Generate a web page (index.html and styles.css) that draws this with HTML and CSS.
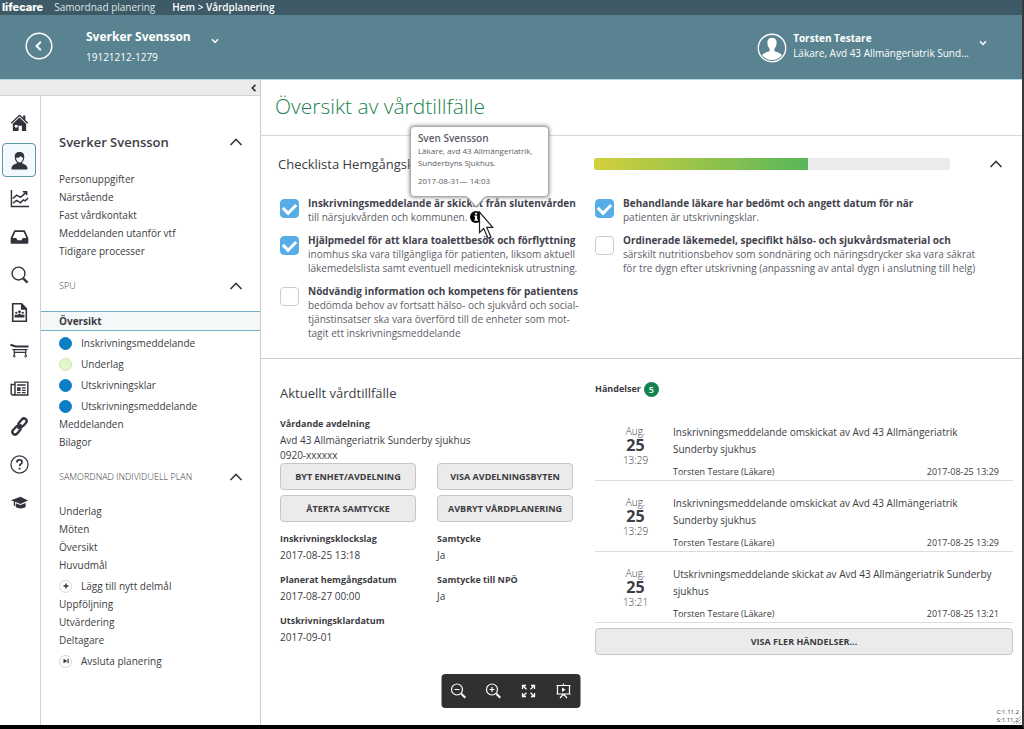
FILE: index.html
```html
<!DOCTYPE html>
<html lang="sv">
<head>
<meta charset="utf-8">
<meta name="viewport" content="width=device-width, initial-scale=1">
<title>Översikt av vårdtillfälle</title>
<link rel="stylesheet" href="styles.css">
</head>
<body>
<svg class="defs" aria-hidden="true">
  <symbol id="chev-up" viewBox="0 0 14 8"><path d="M1.500 7 7 1.500 12.500 7" fill="none" stroke="currentColor" stroke-width="1.700"/></symbol>
  <symbol id="chev-down" viewBox="0 0 8 6"><path d="M1 1.200 4 4.400 7 1.200" fill="none" stroke="currentColor" stroke-width="1.500"/></symbol>
</svg>
<div class="page">
  <nav class="topbar" aria-label="Sökväg">
    <span class="logo">lifecare</span>
    <span class="product">Samordnad planering</span>
    <span class="crumbs"><a href="#">Hem</a> &gt; <a href="#">Vårdplanering</a></span>
  </nav>
  <header class="header">
    <button class="back" aria-label="Tillbaka"><svg viewBox="0 0 28 28" width="28" height="28"><circle cx="14" cy="14" r="12.800" fill="none" stroke="#fff" stroke-width="1.500"/><path d="M15.800 9.800 11.600 14l4.200 4.200" fill="none" stroke="#fff" stroke-width="2"/></svg></button>
    <div class="patient">
      <strong>Sverker Svensson</strong>
      <span>19121212-1279</span>
    </div>
    <button class="drop" aria-label="Byt patient"><svg width="8" height="6"><use href="#chev-down"/></svg></button>
    <div class="user">
      <svg viewBox="0 0 30 30" width="30" height="30"><circle cx="15" cy="15" r="13.700" fill="none" stroke="#fff" stroke-width="1.400"/><path d="M15 4.800c3.200 0 4.800 2 4.600 5.200-.1 3-1.200 4.700-2.200 5.700v2c.6 1.300 6.600 2 7.500 4.600C22.500 25.300 19 27 15 27s-7.500-1.700-9.900-4.700c.9-2.600 6.900-3.300 7.500-4.600v-2c-1-1-2.100-2.700-2.200-5.700-.2-3.200 1.400-5.200 4.600-5.200z" fill="#fff"/></svg>
      <div class="user-text">
        <strong>Torsten Testare</strong>
        <span>Läkare, Avd 43 Allmängeriatrik Sund...</span>
      </div>
      <button class="drop" aria-label="Användarmeny"><svg width="8" height="6"><use href="#chev-down"/></svg></button>
    </div>
  </header>
  <div class="body">
    <aside class="side">
      <div class="collapse"><button aria-label="Dölj meny"><svg viewBox="0 0 8 8" width="8" height="8"><path d="M5.500.8 2.300 4l3.200 3.200" fill="none" stroke="#333" stroke-width="1.700"/></svg></button></div>
      <div class="side-cols">
        <nav class="rail" aria-label="Moduler">
          <button aria-label="Hem"><svg viewBox="0 0 20 20"><path d="M10 1.500.8 10.200l1 1L10 3.500l8.200 7.700 1-1-3-2.900V2.500h-2.400v2.600z"/><path d="M10 4.700 3 11.300V19h6v-5.500h3.500V19H17v-7.700zM5 12.500h3v2.700H5z" fill-rule="evenodd"/></svg></button>
          <button class="on" aria-label="Patient"><svg viewBox="0 0 20 20"><path d="M10 1C6.700 1 4.700 3 5 6.500c.2 3 1.500 4.800 2.600 5.800-.5 1.500-5.800 1.300-6.100 6.200 0 .8.500 1 1.200 1h14.600c.7 0 1.200-.2 1.200-1-.3-4.900-5.600-4.700-6.100-6.200 1.100-1 2.400-2.800 2.600-5.800C15.300 3 13.300 1 10 1zM6.300 7.200c3 0 4.500-1 5-2 .4.900 1.300 1.600 2.500 1.800-.2 3-2 5-3.800 5S6.400 10 6.300 7.200z" fill-rule="evenodd"/></svg></button>
          <button aria-label="Statistik"><svg viewBox="0 0 20 20" class="ln"><path d="M1.500 1v17.500H20"/><path d="m3 10 4-3.500 4 2.300 6-5.300M13.500 3h4v3.500M3 15l4-3 4 2.500 3-3 2 1 3-3" stroke-width="1.600"/></svg></button>
          <button aria-label="Inkorg"><svg viewBox="0 0 20 20"><path d="M4.500 3.500h11l3.800 8v5.200c0 .5-.3.800-.8.800h-17c-.5 0-.8-.3-.8-.8v-5.200zm1.100 1.800-2.800 6.200h3.700l1.400 2.500h4.200l1.400-2.500h3.700l-2.800-6.200z" fill-rule="evenodd"/></svg></button>
          <button aria-label="Sök"><svg viewBox="0 0 20 20" class="ln"><circle cx="9" cy="9" r="6.800"/><path d="m13.800 14 4.700 4.500" stroke-width="2.500"/></svg></button>
          <button aria-label="Rapport"><svg viewBox="0 0 20 20"><path d="M2 0h10.500L18 5.500V20H2zm1.700 1.700v16.600h12.600V7H11.500V1.700z" fill-rule="evenodd"/><circle cx="10" cy="9.300" r="1.500"/><circle cx="6.600" cy="10.300" r="1.200"/><circle cx="13.400" cy="10.300" r="1.200"/><path d="M4.800 12.300h3L10 11l2.200 1.300h3v3H4.800z"/></svg></button>
          <button aria-label="Vårdplats"><svg viewBox="0 0 20 20" class="ln"><path d="m.5 4 5.500 1.800h13.500" stroke-width="2.200"/><path d="M2.500 9h16M4.500 9v6M16.500 9v6M4.500 12h12" stroke-width="1.300"/><circle cx="4.500" cy="16" r="1" stroke-width="1"/><circle cx="16.500" cy="16" r="1" stroke-width="1"/></svg></button>
          <button aria-label="Nyheter"><svg viewBox="0 0 20 20"><path d="M4.500 2.500h15v15H2.800c-1.300 0-2.300-1-2.300-2.300V5h4zM4.500 6.500H2v8.700c0 .5.400.8.800.8.900 0 1.700-.2 1.700-.8zM6 4v12h12V4z" fill-rule="evenodd"/><path d="M7.500 5.500h9v1.600h-9zM7.500 8.700h3.600v3.800H7.500zM12.500 8.700h4V10h-4zM12.500 11.200h4v1.300h-4zM7.500 13.800h3.600V15H7.500zM12.500 13.800h4V15h-4z"/></svg></button>
          <button aria-label="Länkar"><svg viewBox="0 0 20 20" class="ln"><rect x="-5" y="-2.800" width="10" height="5.600" rx="2.800" transform="translate(13.200 6) rotate(-48)" stroke-width="2.400"/><rect x="-5" y="-2.800" width="10" height="5.600" rx="2.800" transform="translate(6.800 14) rotate(-48)" stroke-width="2.400"/><path d="m8.200 12.300 3.600-4.600" stroke-width="2.400"/></svg></button>
          <button aria-label="Hjälp"><svg viewBox="0 0 20 20" class="ln"><circle cx="10" cy="10" r="9" stroke-width="1.300"/><path d="M7.300 7.800c0-1.700 1.200-2.600 2.700-2.600s2.700.9 2.700 2.300c0 2-2.600 2-2.600 4.200" stroke-width="1.800"/><path d="M10.100 13.300v2" stroke-width="2"/></svg></button>
          <button aria-label="Utbildning"><svg viewBox="0 0 20 20"><path d="M11 4 1 7.500l3 1.200v5l1.300-.3V9.200l5.700 2.300 8-3.500zM6 10.700l5 2 5.500-2.300v4.200c-2 2.200-8.500 2.200-10.500 0z"/></svg></button>
        </nav>
        <nav class="menu" aria-label="Patientmeny">
          <h2 class="menu-name">Sverker Svensson <button aria-label="Fäll ihop"><svg width="14" height="8"><use href="#chev-up"/></svg></button></h2>
          <ul>
            <li><a href="#">Personuppgifter</a></li>
            <li><a href="#">Närstående</a></li>
            <li><a href="#">Fast vårdkontakt</a></li>
            <li><a href="#">Meddelanden utanför vtf</a></li>
            <li><a href="#">Tidigare processer</a></li>
          </ul>
          <h3 class="menu-head">SPU <button aria-label="Fäll ihop"><svg width="14" height="8"><use href="#chev-up"/></svg></button></h3>
          <ul>
            <li class="current"><a href="#">Översikt</a></li>
            <li class="sub"><i class="dot"></i><a href="#">Inskrivningsmeddelande</a></li>
            <li class="sub"><i class="dot pale"></i><a href="#">Underlag</a></li>
            <li class="sub"><i class="dot"></i><a href="#">Utskrivningsklar</a></li>
            <li class="sub"><i class="dot"></i><a href="#">Utskrivningsmeddelande</a></li>
            <li><a href="#">Meddelanden</a></li>
            <li><a href="#">Bilagor</a></li>
          </ul>
          <h3 class="menu-head">SAMORDNAD INDIVIDUELL PLAN <button aria-label="Fäll ihop"><svg width="14" height="8"><use href="#chev-up"/></svg></button></h3>
          <ul>
            <li><a href="#">Underlag</a></li>
            <li><a href="#">Möten</a></li>
            <li><a href="#">Översikt</a></li>
            <li><a href="#">Huvudmål</a></li>
            <li class="sub"><i class="dot ring"><svg viewBox="0 0 12 12" width="12" height="12"><path d="M6 3.500v5M3.500 6h5" stroke="#333" stroke-width="1.400"/></svg></i><a href="#">Lägg till nytt delmål</a></li>
            <li><a href="#">Uppföljning</a></li>
            <li><a href="#">Utvärdering</a></li>
            <li><a href="#">Deltagare</a></li>
            <li class="sub"><i class="dot ring"><svg viewBox="0 0 12 12" width="12" height="12"><path d="M3.500 3.800v4.400L7.300 6zM7.500 3.800h1.200v4.400H7.500z" fill="#333"/></svg></i><a href="#">Avsluta planering</a></li>
          </ul>
        </nav>
      </div>
    </aside>
    <main class="main">
      <h1 class="title">Översikt av vårdtillfälle</h1>
      <section class="checklist">
        <div class="check-head">
          <h2>Checklista Hemgångsklar</h2>
          <div class="progress" role="progressbar" aria-label="Checklista" aria-valuenow="60" aria-valuemin="0" aria-valuemax="100"><span style="width:60%"></span></div>
          <button class="fold" aria-label="Fäll ihop"><svg width="14" height="8"><use href="#chev-up"/></svg></button>
        </div>
        <div class="check-cols">
          <div class="checks">
            <div class="check">
              <input type="checkbox" id="c1" checked>
              <div><label for="c1"><strong>Inskrivningsmeddelande är skickat från slutenvården</strong>till närsjukvården och kommunen.</label>
                <span class="info">
                  <button aria-label="Information" aria-describedby="tip"><svg viewBox="0 0 12 12" width="12" height="12"><circle cx="6" cy="6" r="6"/><path d="M5 1.800h2.200v1.700H5zM4.300 4.500h2.900v4h.8v1.300H4.300V8.500H5V5.700h-.7z" fill="#fff"/></svg></button>
                  <span class="tip" id="tip" role="tooltip">
                    <b>Sven Svensson</b>
                    <span>Läkare, avd 43 Allmängeriatrik,<br>Sunderbyns Sjukhus.</span>
                    <time>2017-08-31— 14:03</time>
                    <svg class="tail" viewBox="0 0 20 12" width="20" height="12"><path d="M0 0h20L10 11z" fill="#fff"/><path d="M1 1 10 11 19 1" fill="none" stroke="#aaa" stroke-width="1.200"/></svg>
                  </span>
                  <svg class="cursor" viewBox="0 0 16 30" width="16" height="30"><path d="M1.500 1v20.500l4.200-4 4.300 9.700 3-1.300-4.300-9.500h6z" fill="#fff" stroke="#222" stroke-width="1.200"/></svg>
                </span>
              </div>
            </div>
            <div class="check">
              <input type="checkbox" id="c2" checked>
              <label for="c2"><strong>Hjälpmedel för att klara toalettbesök och förflyttning</strong>inomhus ska vara tillgängliga för patienten, liksom aktuell<br>läkemedelslista samt eventuell medicinteknisk utrustning.</label>
            </div>
            <div class="check">
              <input type="checkbox" id="c3">
              <label for="c3"><strong>Nödvändig information och kompetens för patientens</strong>bedömda behov av fortsatt hälso- och sjukvård och social-<br>tjänstinsatser ska vara överförd till de enheter som mot-<br>tagit ett inskrivningsmeddelande</label>
            </div>
          </div>
          <div class="checks">
            <div class="check">
              <input type="checkbox" id="c4" checked>
              <label for="c4"><strong>Behandlande läkare har bedömt och angett datum för när</strong>patienten är utskrivningsklar.</label>
            </div>
            <div class="check">
              <input type="checkbox" id="c5">
              <label for="c5"><strong>Ordinerade läkemedel, specifikt hälso- och sjukvårdsmaterial och</strong>särskilt nutritionsbehov som sondnäring och näringsdrycker ska vara säkrat<br>för tre dygn efter utskrivning (anpassning av antal dygn i anslutning till helg)</label>
            </div>
          </div>
        </div>
      </section>
      <div class="lower">
        <section class="care">
          <h2>Aktuellt vårdtillfälle</h2>
          <dl class="unit"><dt>Vårdande avdelning</dt><dd>Avd 43 Allmängeriatrik Sunderby sjukhus<br>0920-xxxxxx</dd></dl>
          <div class="buttons">
            <button class="btn">BYT ENHET/AVDELNING</button>
            <button class="btn">VISA AVDELNINGSBYTEN</button>
            <button class="btn">ÅTERTA SAMTYCKE</button>
            <button class="btn">AVBRYT VÅRDPLANERING</button>
          </div>
          <dl class="facts">
            <div><dt>Inskrivningsklockslag</dt><dd>2017-08-25 13:18</dd></div>
            <div><dt>Samtycke</dt><dd>Ja</dd></div>
            <div><dt>Planerat hemgångsdatum</dt><dd>2017-08-27 00:00</dd></div>
            <div><dt>Samtycke till NPÖ</dt><dd>Ja</dd></div>
            <div><dt>Utskrivningsklardatum</dt><dd>2017-09-01</dd></div>
          </dl>
        </section>
        <section class="events">
          <h2>Händelser <span class="count">5</span></h2>
          <ul>
            <li>
              <div class="date">Aug.<b>25</b>13:29</div>
              <div class="event"><p>Inskrivningsmeddelande omskickat av Avd 43 Allmängeriatrik Sunderby sjukhus</p><div class="meta"><span>Torsten Testare (Läkare)</span><time>2017-08-25 13:29</time></div></div>
            </li>
            <li>
              <div class="date">Aug.<b>25</b>13:29</div>
              <div class="event"><p>Inskrivningsmeddelande omskickat av Avd 43 Allmängeriatrik Sunderby sjukhus</p><div class="meta"><span>Torsten Testare (Läkare)</span><time>2017-08-25 13:29</time></div></div>
            </li>
            <li>
              <div class="date">Aug.<b>25</b>13:21</div>
              <div class="event"><p>Utskrivningsmeddelande skickat av Avd 43 Allmängeriatrik Sunderby sjukhus</p><div class="meta"><span>Torsten Testare (Läkare)</span><time>2017-08-25 13:21</time></div></div>
            </li>
          </ul>
          <button class="btn more">VISA FLER HÄNDELSER...</button>
        </section>
      </div>
    </main>
  </div>
  <div class="viewer">
    <button aria-label="Zooma ut"><svg viewBox="0 0 16 16"><circle cx="6.500" cy="6.500" r="5.500"/><path d="M4 6.500h5"/><path d="m10.800 10.800 4 4" stroke-width="2"/></svg></button>
    <button aria-label="Zooma in"><svg viewBox="0 0 16 16"><circle cx="6.500" cy="6.500" r="5.500"/><path d="M4 6.500h5M6.500 4v5"/><path d="m10.800 10.800 4 4" stroke-width="2"/></svg></button>
    <button aria-label="Helskärm"><svg viewBox="0 0 16 16"><path d="M2 6V2.500h3.500M2.300 2.800 6 6.200M10.500 2.500H14V6M13.700 2.800 10 6.200M2 10v3.500h3.500M2.300 13.200 6 9.800M10.500 13.500H14V10M13.700 13.200 10 9.800" stroke-width="1.300"/></svg></button>
    <button aria-label="Presentation"><svg viewBox="0 0 16 16"><path d="M1 2.500h14M2 2.500v8.500h12V2.500M8 .5v2M8 11v1.500M8 11l-3.500 4M8 11l3.500 4M1 11h14"/><path d="M6.500 4.500v4.500l3.500-2.200z" fill="#fff" stroke="none"/></svg></button>
  </div>
  <footer class="version">C:1.11.2<br>S:1.11.2 <svg viewBox="0 0 8 8" width="8" height="8"><path d="M8 0 0 8M8 3 3 8M8 6 6 8" stroke="#aaa" stroke-width="1"/></svg></footer>
</div>
</body>
</html>
```
FILE: styles.css
```css
* { box-sizing: border-box; }
body { margin: 0; font: 10px/18px "Open Sans", "Noto Sans", sans-serif; color: #3c3c42; background: #fff; }
h1, h2, h3, p, ul, dl, dd { margin: 0; padding: 0; }
ul { list-style: none; }
a { color: inherit; text-decoration: none; }
button { font: inherit; color: inherit; background: none; border: 0; padding: 0; display: inline-flex; align-items: center; justify-content: center; }
svg { display: block; flex: none; }
.defs { position: absolute; width: 0; height: 0; }

.page { position: relative; min-height: 100vh; display: flex; flex-direction: column; border-right: 2px solid #35393c; border-bottom: 4px solid #000; }

.topbar { display: flex; align-items: center; height: 15px; padding-left: 2px; background: #3d5a66; color: #fff; line-height: 15px; }
.logo { font-family: Inter, "Liberation Sans", sans-serif; font-size: 11px; font-weight: 800; }
.product { margin-left: 11px; color: #dfe6e9; }
.crumbs { margin-left: 17px; font-weight: 600; }

.header { display: flex; align-items: flex-start; height: 65px; padding-left: 25px; background: #598390; border-bottom: 1px solid #b5dbe4; color: #fff; }
.back { margin-top: 17px; }
.patient { display: flex; flex-direction: column; margin: 12px 20px 0 33px; line-height: 20px; }
.patient strong { font-size: 12px; }
.header .drop { height: 8px; margin-top: 22px; }
.user { display: flex; align-items: flex-start; margin: 0 35px 0 auto; }
.user > svg { margin-top: 18px; }
.user-text { display: flex; flex-direction: column; margin: 16px 10px 0 6px; line-height: 15px; }
.user .drop { margin-top: 24px; }

.body { flex: 1; display: flex; }
.side { flex: none; width: 261px; display: flex; flex-direction: column; border-right: 1px solid #ccc; }
.collapse { display: flex; justify-content: flex-end; height: 16px; padding-right: 2px; background: #ebebeb; border-bottom: 1px solid #d2d2d2; }
.side-cols { flex: 1; display: flex; }
.rail { flex: none; width: 41px; display: flex; flex-direction: column; gap: 4px; padding: 9px 0 0 2px; border-right: 1px solid #d0d0d0; }
.rail button { width: 34px; height: 34px; border: 1px solid transparent; border-radius: 4px; }
.rail .on { border-color: #5f97a8; background: #f1f9fc; }
.rail svg { width: 19px; height: 19px; fill: #33333d; }
.rail .ln { fill: none; stroke: #33333d; stroke-width: 1.5; }

.menu { flex: 1; padding-top: 36px; }
.menu-name, .menu-head { display: flex; align-items: center; justify-content: space-between; padding: 0 17px 0 18px; line-height: 20px; }
.menu-name { font-size: 13px; font-weight: 600; margin-bottom: 18px; }
.menu-head { font-size: 9px; font-weight: 300; margin: 16px 0 15px; }
.menu li { padding: 0 18px; }
.menu .current { background: #f5f8f9; border: solid #78afc4; border-width: 1px 0; font-weight: 700; }
.menu .sub { display: flex; align-items: center; gap: 9px; padding-top: 3px; }
.dot { width: 13px; height: 13px; border-radius: 50%; background: #0c7fc4; border: 1px solid #0c7fc4; flex: none; }
.pale { background: #e2f7ca; border-color: #cce5b0; }
.ring { display: flex; align-items: center; justify-content: center; background: #fff; border-color: #d5d5d5; }

.main { flex: 1; min-width: 0; }
.title { padding: 10px 14px 13px; font-size: 21px; line-height: 32px; font-weight: 300; color: #23824f; border-bottom: 1px solid #d8d8d8; }
.checklist { padding: 18px 9px 18px 19px; border-bottom: 1px solid #ccc; }
.check-head, .check-cols, .lower { display: grid; grid-template-columns: 300px 1fr; column-gap: 15px; }
.check-head { grid-template-columns: 301px 1fr auto; align-items: center; padding-right: 10px; margin-left: -2px; }
.check-head h2, .care h2 { font-size: 13px; line-height: 20px; font-weight: 400; }
.progress { height: 12px; margin-right: 24px; background: #ebebeb; border-radius: 3px; overflow: hidden; }
.progress span { display: block; height: 100%; background: linear-gradient(90deg, #d3d03c, #58b75b); }
.check-cols { padding-top: 22px; }
.checks { display: flex; flex-direction: column; gap: 9px; }
.check { display: flex; gap: 9px; line-height: 14px; color: #5d5d68; white-space: nowrap; }
.check strong { display: block; color: #42424d; }
.check input { appearance: none; flex: none; width: 19px; height: 19px; margin: 3px 0 0; border: 1px solid #ccc; border-radius: 4px; background: #fff; }
.check input:checked { border-color: #57ade6; background: #57ade6; display: grid; place-items: center; }
.check input:checked::before { content: ""; width: 10px; height: 6px; margin-bottom: 3px; border: solid #fff; border-width: 0 0 3px 3px; transform: rotate(-45deg); }
.info { position: relative; display: inline-block; vertical-align: top; height: 14px; }
.info button { height: 14px; vertical-align: top; }
.tip { position: absolute; left: -60px; bottom: 27px; width: 139px; height: 71px; padding: 4px 7px; display: flex; flex-direction: column; z-index: 2; background: #fff; border: 1px solid #aaa; border-radius: 4px; box-shadow: 0 0 4px #777; font-size: 8px; line-height: 12px; }
.tip b { font-size: 10px; line-height: 14px; font-weight: 600; }
.tip time { margin-top: 6px; }
.tail { position: absolute; left: 55px; top: 69px; }
.cursor { position: absolute; left: 8px; top: 1px; z-index: 3; }

.lower { padding: 19px 9px 0 19px; }
.care h2 { padding-top: 5px; }
dt, .events h2 { font-size: 9px; font-weight: 700; line-height: 16px; }
.unit { margin: 14px 0 0; }
.unit dd { line-height: 15px; }
.unit dt { margin-bottom: 2px; line-height: 14px; }
.buttons, .facts { display: grid; grid-template-columns: 136px 136px; gap: 5px 21px; }
.btn { height: 27px; background: #ebebeb; border: 1px solid #c6c6c6; border-radius: 4px; font-size: 9px; font-weight: 700; }
.facts { margin-top: 9px; row-gap: 8px; }
.facts dd { line-height: 17px; }
.events h2 { display: flex; align-items: center; gap: 3px; padding-top: 3px; }
.count { width: 15px; height: 15px; border-radius: 50%; background: #14824f; color: #fff; line-height: 15px; text-align: center; font-weight: 600; }
.events ul { padding-top: 13px; }
.events li { display: flex; padding-top: 14px; border-bottom: 1px solid #ddd; }
.date { width: 78px; padding: 0 0 0 3px; text-align: center; line-height: 14px; font-weight: 300; }
.date b { display: block; font-size: 16px; line-height: 15px; font-weight: 700; }
.event { flex: 1; }
.event p { line-height: 17px; padding-right: 16px; }
.meta { display: flex; justify-content: space-between; padding: 5px 14px 0 0; font-size: 9px; line-height: 17px; }
.more { width: 100%; margin-top: 5px; }

.viewer { position: absolute; bottom: 17px; left: 50%; transform: translateX(-50%); display: flex; gap: 19px; padding: 9px 9px; background: #303030; border-radius: 4px; }
.viewer svg { width: 16px; height: 16px; fill: none; stroke: #fff; stroke-width: 1.2; }
.version { position: absolute; right: 3px; bottom: 1px; font-size: 6px; line-height: 8px; }
.version svg { position: absolute; right: -2px; bottom: 0; }
```
